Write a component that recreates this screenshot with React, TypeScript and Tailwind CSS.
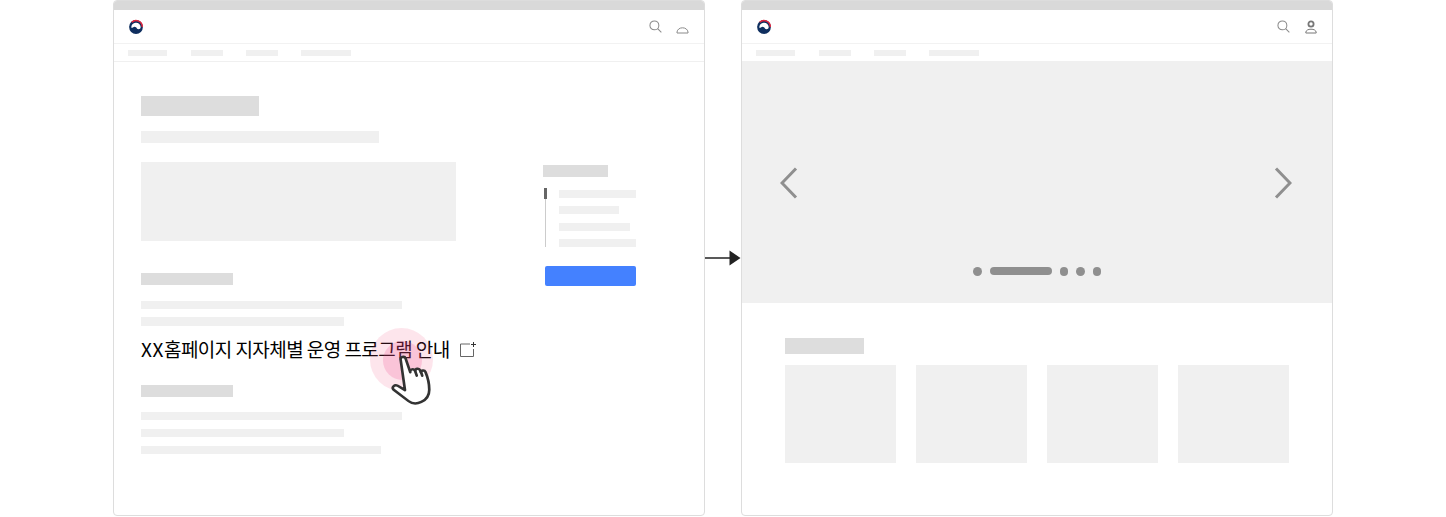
import React from "react";

const Logo = () => (
  <svg width="16" height="16" viewBox="0 0 16 16" className="shrink-0" aria-hidden="true">
    <circle cx="8" cy="8" r="6.9" fill="#0f2f5f" />
    <path d="M3.700 3.300A6.300 6.300 0 0 1 14.300 8" fill="none" stroke="#e0243c" strokeWidth="1.500" />
    <path d="M3.300 8.700A4.700 4.700 0 0 1 12.700 8c0 1.300-1 2.300-2.300 2.300-1.400 0-1.600-1.300-2.400-2-.9-.8-2.300-.7-3 .1-.5.5-1.300.6-1.700.3z" fill="#ffffff" />
  </svg>
);

const SearchIcon = () => (
  <svg width="13" height="13" viewBox="0 0 14 14" fill="none" stroke="#8a8a8a" strokeWidth="1.100" aria-hidden="true">
    <circle cx="5.800" cy="5.800" r="4.800" />
    <path d="M9.300 9.300l4 4" />
  </svg>
);

const Bar = ({ className }: { className: string }) => <div className={className} />;

const NavBars = () => (
  <div className="flex h-[18px] items-center border-b border-[#f0f0f0] pl-[14px]">
    <Bar className="mr-6 h-[6px] w-[39px] bg-[#f0f0f0]" />
    <Bar className="mr-[23px] h-[6px] w-[32px] bg-[#f0f0f0]" />
    <Bar className="mr-[23px] h-[6px] w-[32px] bg-[#f0f0f0]" />
    <Bar className="h-[6px] w-[50px] bg-[#f0f0f0]" />
  </div>
);

const Header = ({ icon, iconClass }: { icon: React.ReactNode; iconClass: string }) => (
  <>
    <div className="h-[9px] bg-[#d9d9d9]" />
    <div className="flex h-[34px] items-center justify-between border-b border-[#f2f2f2] pl-[14px] pr-[15px]">
      <Logo />
      <div className="flex items-center">
        <SearchIcon />
        <div className={iconClass}>{icon}</div>
      </div>
    </div>
  </>
);

const HalfProfile = () => (
  <svg width="13" height="14" viewBox="0 0 13 14" fill="none" stroke="#8a8a8a" strokeWidth="1" aria-hidden="true">
    <path d="M1 13v-1c.4-2.600 2.600-4.200 5.500-4.200S11.600 9.400 12 12v1z" />
  </svg>
);

const Profile = () => (
  <svg width="12" height="14" viewBox="0 0 12 14" fill="none" stroke="#777777" aria-hidden="true">
    <circle cx="6" cy="4" r="2.600" strokeWidth="1.800" />
    <path d="M.8 13v-.8c.4-2 2.400-3 5.200-3s4.800 1 5.200 3v.8z" strokeWidth="1" />
  </svg>
);

const NewWindow = () => (
  <svg width="18" height="17" viewBox="0 0 18 17" fill="none" strokeWidth="1" aria-hidden="true">
    <path d="M11 3H1.500v12.500h13V8" stroke="#666666" />
    <path d="M14.500 1v5M12 3.500h5" stroke="#333333" />
  </svg>
);

const Hand = () => (
  <svg width="47" height="50" viewBox="0 0 42 48" preserveAspectRatio="none" fill="#ffffff" stroke="#333333" strokeWidth="2.400" strokeLinejoin="round" strokeLinecap="round" aria-hidden="true">
    <path d="M9.500 4.500c-.7-2.600 3.500-3.800 4.400-1.200l4.200 13.200c-.4-3 3.300-3.900 4.400-1.100.1-2.500 3.600-3 4.500-.5l.6 1.800c.1-2.100 3.200-2.700 4.100-.4 2.300 5.800 3.400 11.700 3.400 17 0 5.500-3 9.700-7.100 11.800-3.800 2-8.400 1.700-11.400-.8L3.300 33.400c-2.200-2.300.6-5.500 3.600-3.900l6.500 4.200z" />
    <path d="M22.500 15.400l1.400 4.400M27.600 15.900l1.200 4" fill="none" />
  </svg>
);

const Chevron = ({ d }: { d: string }) => (
  <svg width="18" height="32" viewBox="0 0 18 32" fill="none" stroke="#8f8f8f" strokeWidth="3" aria-hidden="true">
    <path d={d} />
  </svg>
);

const Dot = () => <span className="h-[8.5px] w-[8.5px] rounded-full bg-[#8f8f8f]" />;

const Card = () => <div className="h-[98px] w-[111px] bg-[#f0f0f0]" />;

const ArticleWindow = () => (
  <div className="h-[516px] w-[592px] shrink-0 overflow-hidden rounded-[4px] border border-[#dddddd] bg-white">
    <Header icon={<HalfProfile />} iconClass="ml-[14px] h-[14px] w-[13px]" />
    <NavBars />
    <div className="flex justify-between pl-[27px] pr-[68px]">
      <div className="w-[340px] pt-[34px]">
        <Bar className="h-[20px] w-[118px] bg-[#dddddd]" />
        <Bar className="mt-[15px] h-[12px] w-[238px] bg-[#f0f0f0]" />
        <Bar className="mt-[19px] h-[79px] w-[315px] bg-[#f0f0f0]" />
        <Bar className="mt-[32px] h-[12px] w-[92px] bg-[#dddddd]" />
        <Bar className="mt-[16px] h-[8px] w-[261px] bg-[#f0f0f0]" />
        <Bar className="mt-[8px] h-[9px] w-[203px] bg-[#f0f0f0]" />
        <div className="relative mt-[11px] flex h-[24px] w-[340px] items-center whitespace-nowrap font-['Noto_Sans_CJK_KR',sans-serif] text-[19px] leading-[24px] tracking-[-0.55px] text-black">
          <span className="tracking-[0.6px]">XX</span>
          <span className="whitespace-pre">홈페이지 지자체별 운영 프로그램 안내</span>
          <span className="ml-[9px]">
            <NewWindow />
          </span>
          <span className="absolute left-[229px] top-[-9px] h-[63px] w-[63px] rounded-full bg-[#f4517f]/15" />
          <span className="absolute left-[242px] top-[4px] h-[39px] w-[39px] rounded-full bg-[#f0408a]/20" />
          <span className="absolute left-[249px] top-[18px]">
            <Hand />
          </span>
        </div>
        <Bar className="mt-[24px] h-[12px] w-[92px] bg-[#dddddd]" />
        <Bar className="mt-[15px] h-[8px] w-[261px] bg-[#f0f0f0]" />
        <Bar className="mt-[9px] h-[8px] w-[203px] bg-[#f0f0f0]" />
        <Bar className="mt-[9px] h-[8px] w-[240px] bg-[#f0f0f0]" />
      </div>
      <div className="w-[93px] pt-[103px]">
        <Bar className="h-[12px] w-[65px] bg-[#dddddd]" />
        <div className="mt-[11px] flex h-[59px]">
          <div className="ml-[1px] flex w-[3px] flex-col items-center">
            <div className="h-[11px] w-[3px] bg-[#666666]" />
            <div className="w-[1px] flex-1 bg-[#cccccc]" />
          </div>
          <div className="ml-[12px] flex flex-col justify-between pt-[2px]">
            <Bar className="h-[8px] w-[77px] bg-[#f0f0f0]" />
            <Bar className="h-[8px] w-[60px] bg-[#f0f0f0]" />
            <Bar className="h-[8px] w-[71px] bg-[#f0f0f0]" />
            <Bar className="h-[8px] w-[77px] bg-[#f0f0f0]" />
          </div>
        </div>
        <Bar className="ml-[2px] mt-[19px] h-[20px] w-[91px] rounded-[2px] bg-[#4481ff]" />
      </div>
    </div>
  </div>
);

const MainWindow = () => (
  <div className="h-[516px] w-[592px] shrink-0 overflow-hidden rounded-[4px] border border-[#dddddd] bg-white">
    <Header icon={<Profile />} iconClass="ml-[15px] h-[14px] w-[12px]" />
    <NavBars />
    <div className="h-[241px] bg-[#f0f0f0] pt-[105px]">
      <div className="flex h-[32px] items-center justify-between pl-[38px] pr-[40px]">
        <Chevron d="M16 1.500 2 16l14 14.500" />
        <Chevron d="M2 1.500 16 16 2 30.500" />
      </div>
      <div className="mt-[68px] flex items-center justify-center gap-[8px]">
        <Dot />
        <span className="h-[8px] w-[62px] rounded-full bg-[#8f8f8f]" />
        <Dot />
        <Dot />
        <Dot />
      </div>
    </div>
    <div className="px-[43px] pt-[35px]">
      <Bar className="h-[16px] w-[79px] bg-[#dddddd]" />
      <div className="mt-[11px] flex gap-[20px]">
        <Card />
        <Card />
        <Card />
        <Card />
      </div>
    </div>
  </div>
);

const Arrow = () => (
  <svg width="36" height="16" viewBox="0 0 36 16" aria-hidden="true" className="mt-[250px] shrink-0">
    <path d="M0 8h26" stroke="#222222" strokeWidth="1.500" />
    <path d="M24.500 .5l11 7.500-11 7.500z" fill="#222222" />
  </svg>
);

export default function App() {
  return (
    <div className="flex h-[517px] w-[1446px] items-start justify-center bg-white">
      <ArticleWindow />
      <Arrow />
      <MainWindow />
    </div>
  );
}
